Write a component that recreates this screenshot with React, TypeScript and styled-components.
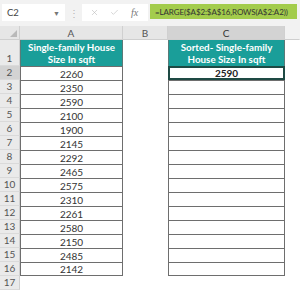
import * as React from 'react';
import styled, { createGlobalStyle } from 'styled-components';
import { X, Check } from 'lucide-react';

const GlobalStyle = createGlobalStyle`
  * { box-sizing: border-box; }
  body {
    margin: 0;
    background: #ffffff;
    font-family: Lato, 'Liberation Sans', sans-serif;
  }
`;

const Sheet = styled.div`
  width: 300px;
  height: 290px;
  overflow: hidden;
  background: #ffffff;
  display: flex;
  flex-direction: column;
`;

const FormulaBar = styled.div`
  height: 26px;
  flex: none;
  background: #f2f2f2;
  display: flex;
  align-items: flex-start;
  padding: 4px 3px 0 2px;
`;

const NameBox = styled.div`
  width: 63px;
  height: 17px;
  background: #ffffff;
  display: flex;
  align-items: center;
  justify-content: space-between;
  padding: 0 5px 0 5px;
  font-size: 9.5px;
  color: #444;
`;

const Caret = styled.span`
  font-size: 7px;
  color: #777;
`;

const Dots = styled.div`
  width: 17px;
  height: 17px;
  display: flex;
  align-items: center;
  justify-content: center;
  color: #b5b5b5;
  font-size: 10px;
`;

const ButtonsBox = styled.div`
  width: 66px;
  height: 17px;
  background: #ffffff;
  display: flex;
  align-items: center;
  justify-content: space-around;
  padding: 0 4px 0 2px;
  color: #b8b8b8;
`;

const Fx = styled.span`
  font-family: 'Liberation Serif', serif;
  font-style: italic;
  font-size: 10px;
  color: #777;
`;

const FormulaInput = styled.div`
  flex: 1;
  height: 15px;
  margin-left: 2px;
  background: #a3cc4c;
  display: flex;
  align-items: center;
  padding-left: 5px;
  font-size: 8px;
  letter-spacing: -0.1px;
  color: #333;
  white-space: nowrap;
  overflow: hidden;
`;

const Grid = styled.div`
  display: grid;
  grid-template-columns: 20px 103px 45px 117px 15px;
  grid-template-rows: 14px 26px repeat(16, 14px);
`;

const ColHead = styled.div<{ $active?: boolean; $blank?: boolean }>`
  background: ${p => (p.$active ? '#d3d3d3' : p.$blank ? '#f2f2f2' : '#e6e6e6')};
  border-right: 1px solid ${p => (p.$blank ? '#f2f2f2' : '#d0d0d0')};
  border-bottom: 1px solid #cfcfcf;
  display: flex;
  align-items: center;
  justify-content: center;
  font-size: 10px;
  color: ${p => (p.$active ? '#333' : '#555')};
`;

const Corner = styled.div`
  background: #e6e6e6;
  border-right: 1px solid #d0d0d0;
  border-bottom: 1px solid #cfcfcf;
  display: flex;
  align-items: flex-end;
  justify-content: flex-end;
  padding: 0 2px 2px 0;
`;

const RowHead = styled.div<{ $active?: boolean }>`
  background: ${p => (p.$active ? '#d3d3d3' : '#eaeaea')};
  border-right: 1px solid #d0d0d0;
  border-bottom: 1px solid #dadada;
  display: flex;
  align-items: flex-end;
  justify-content: center;
  padding-bottom: 1px;
  font-size: 10px;
  color: #555;
`;

const HeaderCell = styled.div`
  background: #1a9e99;
  color: #ffffff;
  font-weight: 700;
  font-size: 9.8px;
  line-height: 12px;
  display: flex;
  align-items: center;
  justify-content: center;
  text-align: center;
  border-left: 1px solid #5a7a78;
  border-right: 1px solid #5a7a78;
`;

const DataCell = styled.div<{ $last?: boolean }>`
  background: #ffffff;
  border-left: 1px solid #6e6e6e;
  border-right: 1px solid #6e6e6e;
  border-top: 1px solid #6e6e6e;
  border-bottom: ${p => (p.$last ? '1px solid #6e6e6e' : 'none')};
  display: flex;
  align-items: center;
  justify-content: center;
  font-size: 10px;
  color: #333;
`;

const SelectedCell = styled.div`
  background: #ffffff;
  border: 2px solid #1e4a44;
  display: flex;
  align-items: center;
  justify-content: center;
  font-size: 10px;
  font-weight: 700;
  color: #222;
`;

const Blank = styled.div`
  background: #ffffff;
`;

const sizes = [
  2260, 2350, 2590, 2100, 1900, 2145, 2292, 2465, 2575, 2310, 2261, 2580, 2150,
  2485, 2142,
];

export default function App() {
  return (
    <Sheet>
      <GlobalStyle />
      <FormulaBar>
        <NameBox>
          C2
          <Caret>▼</Caret>
        </NameBox>
        <Dots>⋮</Dots>
        <ButtonsBox>
          <X size={9} strokeWidth={1.5} />
          <Check size={9} strokeWidth={1.5} />
          <Fx>fx</Fx>
        </ButtonsBox>
        <FormulaInput>=LARGE($A$2:$A$16,ROWS(A$2:A2))</FormulaInput>
      </FormulaBar>
      <Grid>
        <Corner>
          <svg width="7" height="7" viewBox="0 0 7 7">
            <polygon points="7,0 7,7 0,7" fill="#b9b9b9" />
          </svg>
        </Corner>
        <ColHead>A</ColHead>
        <ColHead>B</ColHead>
        <ColHead $active>C</ColHead>
        <ColHead $blank />

        <RowHead>1</RowHead>
        <HeaderCell>
          Single-family House
          <br />
          Size In sqft
        </HeaderCell>
        <Blank />
        <HeaderCell>
          Sorted- Single-family
          <br />
          House Size In sqft
        </HeaderCell>
        <Blank />

        {sizes.map((v, i) => (
          <React.Fragment key={i}>
            <RowHead $active={i === 0}>{i + 2}</RowHead>
            <DataCell $last={i === sizes.length - 1}>{v}</DataCell>
            <Blank />
            {i === 0 ? (
              <SelectedCell>2590</SelectedCell>
            ) : (
              <DataCell $last={i === sizes.length - 1} />
            )}
            <Blank />
          </React.Fragment>
        ))}

        <RowHead>17</RowHead>
        <Blank />
        <Blank />
        <Blank />
        <Blank />
      </Grid>
    </Sheet>
  );
}
